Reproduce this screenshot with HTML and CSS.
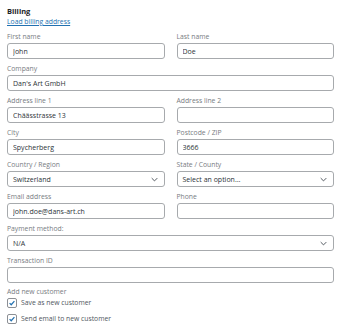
FILE: index.html
```html
<!DOCTYPE html>
<html lang="en">
<head>
    <meta charset="UTF-8">
    <meta name="viewport" content="width=device-width, initial-scale=1.0">
    <title>Billing</title>
    <link rel="stylesheet" href="styles.css">
</head>
<body>
    <div class="billing">
        <h3>Billing</h3>
        <a href="#" class="load-link">Load billing address</a>

        <div class="form-grid">
            <div class="field">
                <label for="first_name">First name</label>
                <input type="text" id="first_name" value="John">
            </div>
            <div class="field">
                <label for="last_name">Last name</label>
                <input type="text" id="last_name" value="Doe">
            </div>
            <div class="field wide">
                <label for="company">Company</label>
                <input type="text" id="company" value="Dan's Art GmbH">
            </div>
            <div class="field">
                <label for="address_1">Address line 1</label>
                <input type="text" id="address_1" value="Chäässtrasse 13">
            </div>
            <div class="field">
                <label for="address_2">Address line 2</label>
                <input type="text" id="address_2" value="">
            </div>
            <div class="field">
                <label for="city">City</label>
                <input type="text" id="city" value="Spycherberg">
            </div>
            <div class="field">
                <label for="postcode">Postcode / ZIP</label>
                <input type="text" id="postcode" value="3666">
            </div>
            <div class="field">
                <label for="country">Country / Region</label>
                <div class="select-box">
                    <span>Switzerland</span>
                    <svg class="chevron" viewBox="0 0 10 6" width="7" height="5"><path d="M1 1l4 4 4-4" fill="none" stroke="#50575e" stroke-width="1.4"/></svg>
                </div>
            </div>
            <div class="field">
                <label for="state">State / County</label>
                <div class="select-box">
                    <span>Select an option…</span>
                    <svg class="chevron" viewBox="0 0 10 6" width="7" height="5"><path d="M1 1l4 4 4-4" fill="none" stroke="#50575e" stroke-width="1.4"/></svg>
                </div>
            </div>
            <div class="field">
                <label for="email">Email address</label>
                <input type="text" id="email" value="john.doe@dans-art.ch">
            </div>
            <div class="field">
                <label for="phone">Phone</label>
                <input type="text" id="phone" value="">
            </div>
            <div class="field wide">
                <label for="payment">Payment method:</label>
                <div class="select-box">
                    <span>N/A</span>
                    <svg class="chevron" viewBox="0 0 10 6" width="7" height="5"><path d="M1 1l4 4 4-4" fill="none" stroke="#50575e" stroke-width="1.4"/></svg>
                </div>
            </div>
            <div class="field wide">
                <label for="transaction">Transaction ID</label>
                <input type="text" id="transaction" value="">
            </div>
        </div>

        <div class="new-customer">
            <div class="field-label">Add new customer</div>
            <label class="check">
                <span class="box"><svg viewBox="0 0 10 10" width="8" height="8"><path d="M2 5.2l2 2 4-4.6" fill="none" stroke="#2271b1" stroke-width="1.5"/></svg></span>
                Save as new customer
            </label>
            <label class="check">
                <span class="box"><svg viewBox="0 0 10 10" width="8" height="8"><path d="M2 5.2l2 2 4-4.6" fill="none" stroke="#2271b1" stroke-width="1.5"/></svg></span>
                Send email to new customer
            </label>
        </div>
    </div>
</body>
</html>
```

FILE: styles.css
```css
* {
    margin: 0;
    padding: 0;
    box-sizing: border-box;
}

body {
    font-family: 'Open Sans', 'Noto Sans', sans-serif;
    background: #fff;
    color: #2c3338;
}

.billing {
    padding: 6px 6px 0 7px;
}

h3 {
    font-size: 7.5px;
    font-weight: 700;
    line-height: 11px;
    color: #1d2327;
}

.load-link {
    display: block;
    font-size: 6.8px;
    line-height: 10px;
    color: #2271b1;
    text-decoration: underline;
    margin-bottom: 5px;
}

.form-grid {
    display: grid;
    grid-template-columns: 1fr 1fr;
    column-gap: 12px;
    row-gap: 5px;
}

.field.wide {
    grid-column: 1 / -1;
}

.field label,
.field-label {
    display: block;
    font-size: 6.8px;
    line-height: 10px;
    color: #787c82;
    margin-bottom: 1px;
}

input[type="text"],
.select-box {
    display: flex;
    align-items: center;
    width: 100%;
    height: 16px;
    padding: 0 5px;
    border: 1px solid #a7aaad;
    border-radius: 3px;
    font-family: inherit;
    font-size: 7px;
    color: #2c3338;
    background: #fff;
}

.select-box {
    justify-content: space-between;
    padding-right: 6px;
}

.new-customer {
    margin-top: 4px;
}

.check {
    display: flex;
    align-items: center;
    gap: 4px;
    font-size: 6.8px;
    line-height: 10px;
    color: #50575e;
    margin-bottom: 6px;
}

.box {
    display: flex;
    align-items: center;
    justify-content: center;
    width: 10px;
    height: 10px;
    border: 1px solid #8c8f94;
    border-radius: 2px;
}
```
